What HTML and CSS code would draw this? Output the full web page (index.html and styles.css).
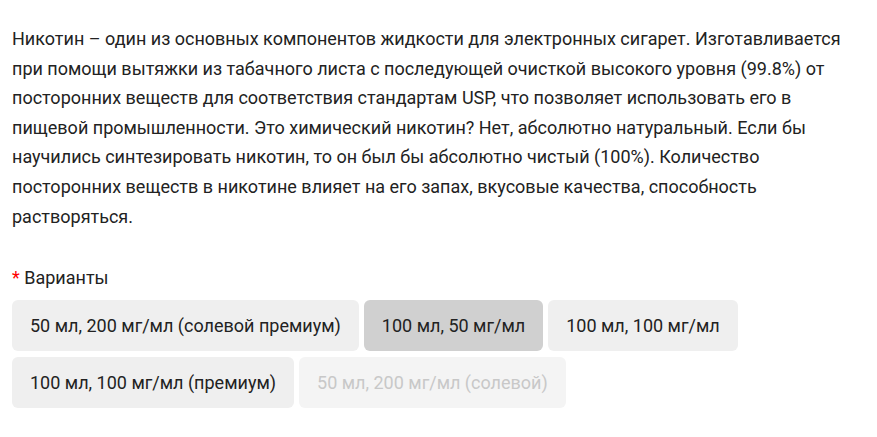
FILE: index.html
```html
<html lang="en">
<head>
  <meta charset="UTF-8">
  <title>Никотин</title>
  <link rel="stylesheet" href="styles.css">
</head>
<body>
  <div class="product">
    <p class="description">Никотин – один из основных компонентов жидкости для электронных сигарет. Изготавливается при помощи вытяжки из табачного листа с последующей очисткой высокого уровня (99.8%) от посторонних веществ для соответствия стандартам USP, что позволяет использовать его в пищевой промышленности. Это химический никотин? Нет, абсолютно натуральный. Если бы научились синтезировать никотин, то он был бы абсолютно чистый (100%). Количество посторонних веществ в никотине влияет на его запах, вкусовые качества, способность растворяться.</p>

    <div class="option">
      <div class="option-label"><span class="required">*</span> Варианты</div>
      <div class="variants">
        <button class="variant">50 мл, 200 мг/мл (солевой премиум)</button>
        <button class="variant active">100 мл, 50 мг/мл</button>
        <button class="variant">100 мл, 100 мг/мл</button>
        <button class="variant">100 мл, 100 мг/мл (премиум)</button>
        <button class="variant disabled" disabled>50 мл, 200 мг/мл (солевой)</button>
      </div>
    </div>
  </div>
</body>
</html>
```

FILE: styles.css
```css
body {
  margin: 0;
  background: #fff;
  font-family: Roboto, "Liberation Sans", sans-serif;
  color: #222;
}

.product {
  padding: 24px 12px 0;
  width: 853px;
}

.description {
  margin: 0;
  font-size: 18px;
  line-height: 29.6px;
}

.option {
  margin-top: 36px;
}

.option-label {
  font-size: 18px;
  line-height: 22px;
  margin-bottom: 11px;
}

.required {
  color: #f00;
}

.variants {
  display: flex;
  flex-wrap: wrap;
  gap: 6px 5px;
}

.variant {
  height: 51px;
  padding: 0 18px;
  border: none;
  border-radius: 6px;
  background: #efefef;
  color: #222;
  font-family: inherit;
  font-size: 18px;
  cursor: pointer;
}

.variant.active {
  background: #d0d0d0;
}

.variant.disabled {
  background: #f4f4f4;
  color: #c8c8c8;
  cursor: default;
}
```
